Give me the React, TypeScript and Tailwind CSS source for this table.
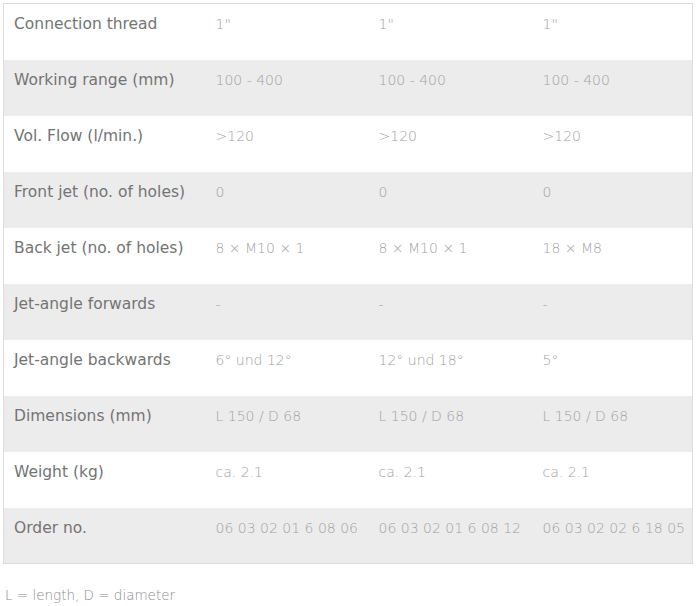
const rows = [
  { label: "Connection thread", values: ["1\"", "1\"", "1\""] },
  { label: "Working range (mm)", values: ["100 - 400", "100 - 400", "100 - 400"] },
  { label: "Vol. Flow (l/min.)", values: [">120", ">120", ">120"] },
  { label: "Front jet (no. of holes)", values: ["0", "0", "0"] },
  { label: "Back jet (no. of holes)", values: ["8 × M10 × 1", "8 × M10 × 1", "18 × M8"] },
  { label: "Jet-angle forwards", values: ["-", "-", "-"] },
  { label: "Jet-angle backwards", values: ["6° und 12°", "12° und 18°", "5°"] },
  { label: "Dimensions (mm)", values: ["L 150 / D 68", "L 150 / D 68", "L 150 / D 68"] },
  { label: "Weight (kg)", values: ["ca. 2.1", "ca. 2.1", "ca. 2.1"] },
  { label: "Order no.", values: ["06 03 02 01 6 08 06", "06 03 02 01 6 08 12", "06 03 02 02 6 18 05"] },
];

const widths = ["w-[202px]", "w-[163px]", "w-[164px]", "w-auto"];

const App = () => {
  return (
    <div className="w-[700px] h-[606px] bg-white pt-[3px] pl-[3px] font-['DejaVu_Sans',Verdana,sans-serif]">
      <table className="w-[690px] table-fixed border-collapse border border-[#dcdcdc]">
        <colgroup>
          {widths.map((w, i) => (
            <col key={i} className={w} />
          ))}
        </colgroup>
        <tbody>
          {rows.map((row, index) => (
            <tr key={index} className={index % 2 === 1 ? "bg-[#ececec]" : "bg-white"}>
              <td className="h-[56px] align-top pt-[10px] pl-[10px] text-[15.5px] leading-[20px] text-[#747474] whitespace-nowrap">
                {row.label}
              </td>
              {row.values.map((v, i) => (
                <td
                  key={i}
                  className="h-[56px] align-top pt-[10px] pl-[10px] text-[14px] leading-[20px] font-extralight text-[#a2a2a2] whitespace-nowrap"
                >
                  {v}
                </td>
              ))}
            </tr>
          ))}
        </tbody>
      </table>
      <p className="mt-[21px] pl-[2px] text-[13.5px] leading-[20px] font-extralight text-[#8c8c8c]">
        L = length, D = diameter
      </p>
    </div>
  );
};

export default App;
